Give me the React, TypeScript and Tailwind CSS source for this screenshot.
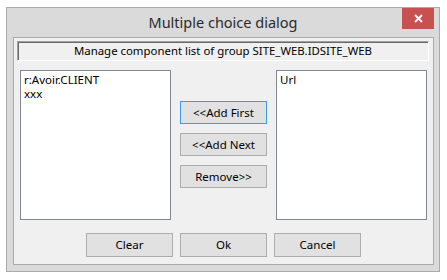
import React from "react";

const font = { fontFamily: '"Segoe UI", "Noto Sans", "Liberation Sans", sans-serif' };

function Btn({ label, focused, tall }: { label: string; focused?: boolean; tall?: boolean }) {
  return (
    <button
      className={
        "w-[87px] flex items-center justify-center bg-[#e1e1e1] border text-[11.5px] leading-none text-black " +
        (tall ? "h-[24px] " : "h-[23px] ") +
        (focused ? "border-[#3c9bf0]" : "border-[#adadad]")
      }
    >
      {label}
    </button>
  );
}

function ListBox({ items }: { items: string[] }) {
  return (
    <div className="w-[151px] h-[150px] bg-white border border-[#828790] pt-[2px] pl-[3px] flex flex-col">
      {items.map((it) => (
        <div key={it} className="text-[11.5px] leading-[14px] h-[14px] text-black whitespace-nowrap">
          {it}
        </div>
      ))}
    </div>
  );
}

export default function App() {
  return (
    <div className="w-[447px] h-[280px] bg-white pt-[7px] pl-[6px]" style={font}>
      <div className="w-[434px] h-[265px] border border-[#aaaaaa] bg-[#dadada] flex flex-col">
        {/* Title bar */}
        <div className="relative h-[29px] flex items-center justify-center">
          <span className="text-[14.5px] text-[#2b2b2b]">Multiple choice dialog</span>
          <div className="absolute top-0 right-[5px] w-[32px] h-[21px] bg-[#c75050] flex items-center justify-center">
            <svg width="9" height="9" viewBox="0 0 9 9">
              <path d="M1 1 L8 8 M8 1 L1 8" stroke="white" strokeWidth="1.8" />
            </svg>
          </div>
        </div>

        {/* Client area */}
        <div className="flex-1 ml-[6px] mr-[5px] mb-[6px] border border-[#aaaaaa] bg-[#f0f0f0] flex flex-col">
          <div className="mt-[3px] ml-[3px] mr-[4px] h-[20px] border border-t-[#a0a0a0] border-l-[#a0a0a0] border-r-white border-b-white shadow-[inset_1px_1px_0_#696969] flex items-center justify-center text-[11.4px] text-black">
            Manage component list of group SITE_WEB.IDSITE_WEB
          </div>

          <div className="mt-[9px] mx-[6px] flex justify-between">
            <ListBox items={["r:Avoir.CLIENT", "xxx"]} />
            <div className="pt-[31px] flex flex-col gap-[9px]">
              <Btn label="<<Add First" focused />
              <Btn label="<<Add Next" />
              <Btn label="Remove>>" />
            </div>
            <ListBox items={["Url"]} />
          </div>

          <div className="mt-[13px] flex justify-center gap-[7px]">
            <Btn label="Clear" tall />
            <Btn label="Ok" tall />
            <Btn label="Cancel" tall />
          </div>
        </div>
      </div>
    </div>
  );
}
